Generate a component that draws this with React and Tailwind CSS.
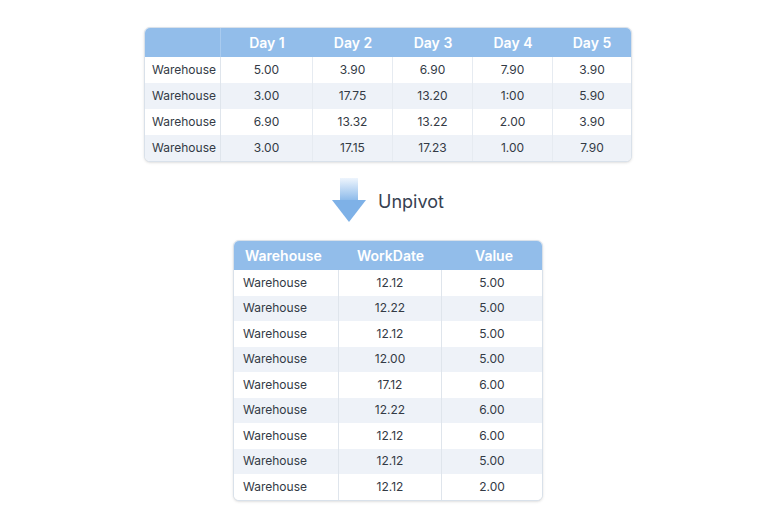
import React from 'react';

const wide = [
  ['5.00', '3.90', '6.90', '7.90', '3.90'],
  ['3.00', '17.75', '13.20', '1:00', '5.90'],
  ['6.90', '13.32', '13.22', '2.00', '3.90'],
  ['3.00', '17.15', '17.23', '1.00', '7.90'],
];

const long = [
  ['12.12', '5.00'],
  ['12.22', '5.00'],
  ['12.12', '5.00'],
  ['12.00', '5.00'],
  ['17.12', '6.00'],
  ['12.22', '6.00'],
  ['12.12', '6.00'],
  ['12.12', '5.00'],
  ['12.12', '2.00'],
];

const WideTable = () => (
  <div className="w-[488px] rounded-md border border-[#d9e1ea] overflow-hidden shadow-sm bg-white">
    <div className="grid grid-cols-[76px_92px_80px_80px_80px_1fr] h-[29px] bg-[#92bdea] text-white font-semibold text-[14px]">
      <div className="border-r border-[#a9cbef]" />
      {['Day 1', 'Day 2', 'Day 3', 'Day 4', 'Day 5'].map((d) => (
        <div key={d} className="flex items-center justify-center">{d}</div>
      ))}
    </div>
    {wide.map((row, i) => (
      <div
        key={i}
        className={`grid grid-cols-[76px_92px_80px_80px_80px_1fr] h-[26px] text-[12px] text-[#333a45] ${i % 2 ? 'bg-[#eef2f8]' : 'bg-white'}`}
      >
        <div className="flex items-center pl-[7px] border-r border-[#dfe5ec]">Warehouse</div>
        {row.map((v, j) => (
          <div key={j} className={`flex items-center justify-center ${j < 4 ? 'border-r border-[#e6ebf1]' : ''}`}>{v}</div>
        ))}
      </div>
    ))}
  </div>
);

const LongTable = () => (
  <div className="w-[310px] rounded-md border border-[#d9e1ea] overflow-hidden shadow-sm bg-white">
    <div className="grid grid-cols-[105px_103px_1fr] h-[29px] bg-[#92bdea] text-white font-semibold text-[14px]">
      <div className="flex items-center pl-[11px]">Warehouse</div>
      <div className="flex items-center justify-center">WorkDate</div>
      <div className="flex items-center justify-center pl-[4px]">Value</div>
    </div>
    {long.map((row, i) => (
      <div
        key={i}
        className={`grid grid-cols-[105px_103px_1fr] h-[25.5px] text-[12px] text-[#333a45] ${i % 2 ? 'bg-[#eef2f8]' : 'bg-white'}`}
      >
        <div className="flex items-center pl-[9px] border-r border-[#dfe5ec]">Warehouse</div>
        <div className="flex items-center justify-center border-r border-[#dfe5ec]">{row[0]}</div>
        <div className="flex items-center justify-center">{row[1]}</div>
      </div>
    ))}
  </div>
);

const Arrow = () => (
  <svg width="34" height="44" viewBox="0 0 34 44">
    <defs>
      <linearGradient id="shaft" x1="0" y1="0" x2="0" y2="1">
        <stop offset="0" stopColor="#eef5fd" />
        <stop offset="1" stopColor="#8ab9ea" />
      </linearGradient>
    </defs>
    <rect x="8" y="0" width="18" height="23" fill="url(#shaft)" />
    <polygon points="0,22 34,22 17,44" fill="#7eb1e7" />
  </svg>
);

export default function App() {
  return (
    <div
      className="w-[768px] h-[512px] bg-white flex flex-col items-center pt-[27px] pl-[8px]"
      style={{ fontFamily: 'Inter, "Open Sans", sans-serif' }}
    >
      <WideTable />
      <div className="flex items-center gap-[12px] mt-[16px] h-[44px]">
        <Arrow />
        <span className="text-[18px] text-[#374151] pt-[3px]">Unpivot</span>
      </div>
      <div className="mt-[18px]">
        <LongTable />
      </div>
    </div>
  );
}
